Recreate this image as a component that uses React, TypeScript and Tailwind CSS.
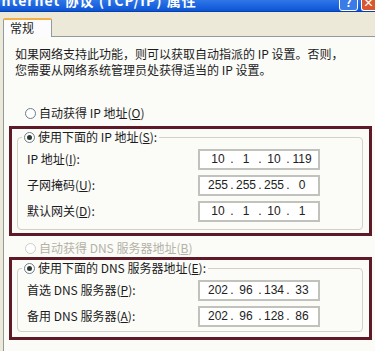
import React from 'react';

const cjk = { fontFamily: '"Noto Sans CJK SC", "Liberation Sans", sans-serif' };

const Mn: React.FC<{ k: string }> = ({ k }) => (
  <>
    (<span className="underline underline-offset-1">{k}</span>)
  </>
);

const Radio: React.FC<{ checked?: boolean; disabled?: boolean }> = ({ checked, disabled }) => (
  <span
    className={`inline-flex items-center justify-center w-[11px] h-[11px] rounded-full border bg-white mr-[3px] shrink-0 ${
      disabled ? 'border-[#cfcfc6]' : 'border-[#6d7c8c]'
    }`}
  >
    {checked && <span className="w-[5px] h-[5px] rounded-full bg-[#2e3a33]" />}
  </span>
);

const IpBox: React.FC<{ parts: string[] }> = ({ parts }) => (
  <div
    className="w-[122px] h-[21px] border-2 border-[#c2c2bc] bg-white flex items-center pl-[7px] text-[12px] text-[#222]"
    style={{ fontFamily: '"Liberation Sans", sans-serif' }}
  >
    {parts.map((p, i) => (
      <React.Fragment key={i}>
        {i > 0 && <span className="w-[6px] text-center">.</span>}
        <span className="w-[22px] text-center">{p}</span>
      </React.Fragment>
    ))}
  </div>
);

const Row: React.FC<{ label: React.ReactNode; parts: string[] }> = ({ label, parts }) => (
  <div className="flex items-center h-[20px]">
    <div className="w-[180px] pl-[9px] whitespace-nowrap">{label}</div>
    <IpBox parts={parts} />
  </div>
);

const Group: React.FC<{
  legend: React.ReactNode;
  children: React.ReactNode;
  pb: string;
  mb: string;
}> = ({ legend, children, pb, mb }) => (
  <div className="border-[3px] border-[#5e1a26] ml-[5px] w-[363px]">
    <fieldset
      className={`border border-[#d3d1c4] rounded-[4px] ml-[5px] mr-[6px] ${pb} ${mb} flex flex-col gap-[6px] pt-[4px]`}
    >
      <legend className="flex items-center px-[2px] ml-[4px] h-[16px] leading-[16px]">
        <Radio checked />
        {legend}
      </legend>
      {children}
    </fieldset>
  </div>
);

export default function App() {
  return (
    <div
      className="w-[375px] h-[351px] bg-[#ece9d8] overflow-hidden text-[12px] text-[#1c1c1c]"
      style={cjk}
    >
      {/* title bar */}
      <div className="h-[12px] bg-gradient-to-b from-[#2f76e8] to-[#0a55d6] flex justify-between overflow-hidden border-b border-[#0b3fa8]">
        <div className="text-white font-bold text-[14px] leading-[14px] -mt-[7px] -ml-[4px] whitespace-nowrap tracking-[1px]">
          Internet 协议 (TCP/IP) 属性
        </div>
        <div className="flex gap-[3px] -mt-[6px]">
          <div className="w-[19px] h-[17px] rounded-[3px] border border-white bg-[#3a7be6] text-white text-[11px] font-bold flex items-end justify-center leading-none pb-[2px]">
            ?
          </div>
          <div className="w-[14px] h-[17px] rounded-l-[3px] border border-white border-r-0 bg-[#d8572c] text-white text-[11px] font-bold flex items-end justify-center leading-none pb-[2px]">
            ×
          </div>
        </div>
      </div>

      {/* tabs */}
      <div className="pt-[6px] pl-[3px]">
        <div className="w-[49px] h-[19px] bg-[#fcfcfe] border border-b-0 border-[#919b9c] border-t-[2px] border-t-[#f3b04a] rounded-t-[2px] pl-[6px] leading-[16px] relative z-10 -mb-px">
          常规
        </div>
        <div className="border-l border-t border-[#919b9c] bg-[#fbfbf8] h-[320px] pt-[9px]">
          <p className="pl-[11px] leading-[16px] whitespace-nowrap">
            如果网络支持此功能，则可以获取自动指派的 IP 设置。否则，
            <br />
            您需要从网络系统管理员处获得适当的 IP 设置。
          </p>

          <div className="flex items-center h-[16px] mt-[27px] pl-[21px]">
            <Radio />
            自动获得 IP 地址<Mn k="O" />
          </div>

          <div className="mt-[5px]">
            <Group
              legend={
                <>
                  使用下面的 IP 地址<Mn k="S" />:
                </>
              }
              pb="pb-[8px]"
              mb="mb-[3px]"
            >
              <Row label={<>IP 地址<Mn k="I" />:</>} parts={['10', '1', '10', '119']} />
              <Row label={<>子网掩码<Mn k="U" />:</>} parts={['255', '255', '255', '0']} />
              <Row label={<>默认网关<Mn k="D" />:</>} parts={['10', '1', '10', '1']} />
            </Group>
          </div>

          <div className="flex items-center h-[16px] mt-[4px] pl-[21px] text-[#b4b2a6]">
            <Radio disabled />
            自动获得 DNS 服务器地址<Mn k="B" />
          </div>

          <div className="mt-[1px]">
            <Group
              legend={
                <>
                  使用下面的 DNS 服务器地址<Mn k="E" />:
                </>
              }
              pb="pb-[5px]"
              mb="mb-[5px]"
            >
              <Row label={<>首选 DNS 服务器<Mn k="P" />:</>} parts={['202', '96', '134', '33']} />
              <Row label={<>备用 DNS 服务器<Mn k="A" />:</>} parts={['202', '96', '128', '86']} />
            </Group>
          </div>
        </div>
      </div>
    </div>
  );
}
